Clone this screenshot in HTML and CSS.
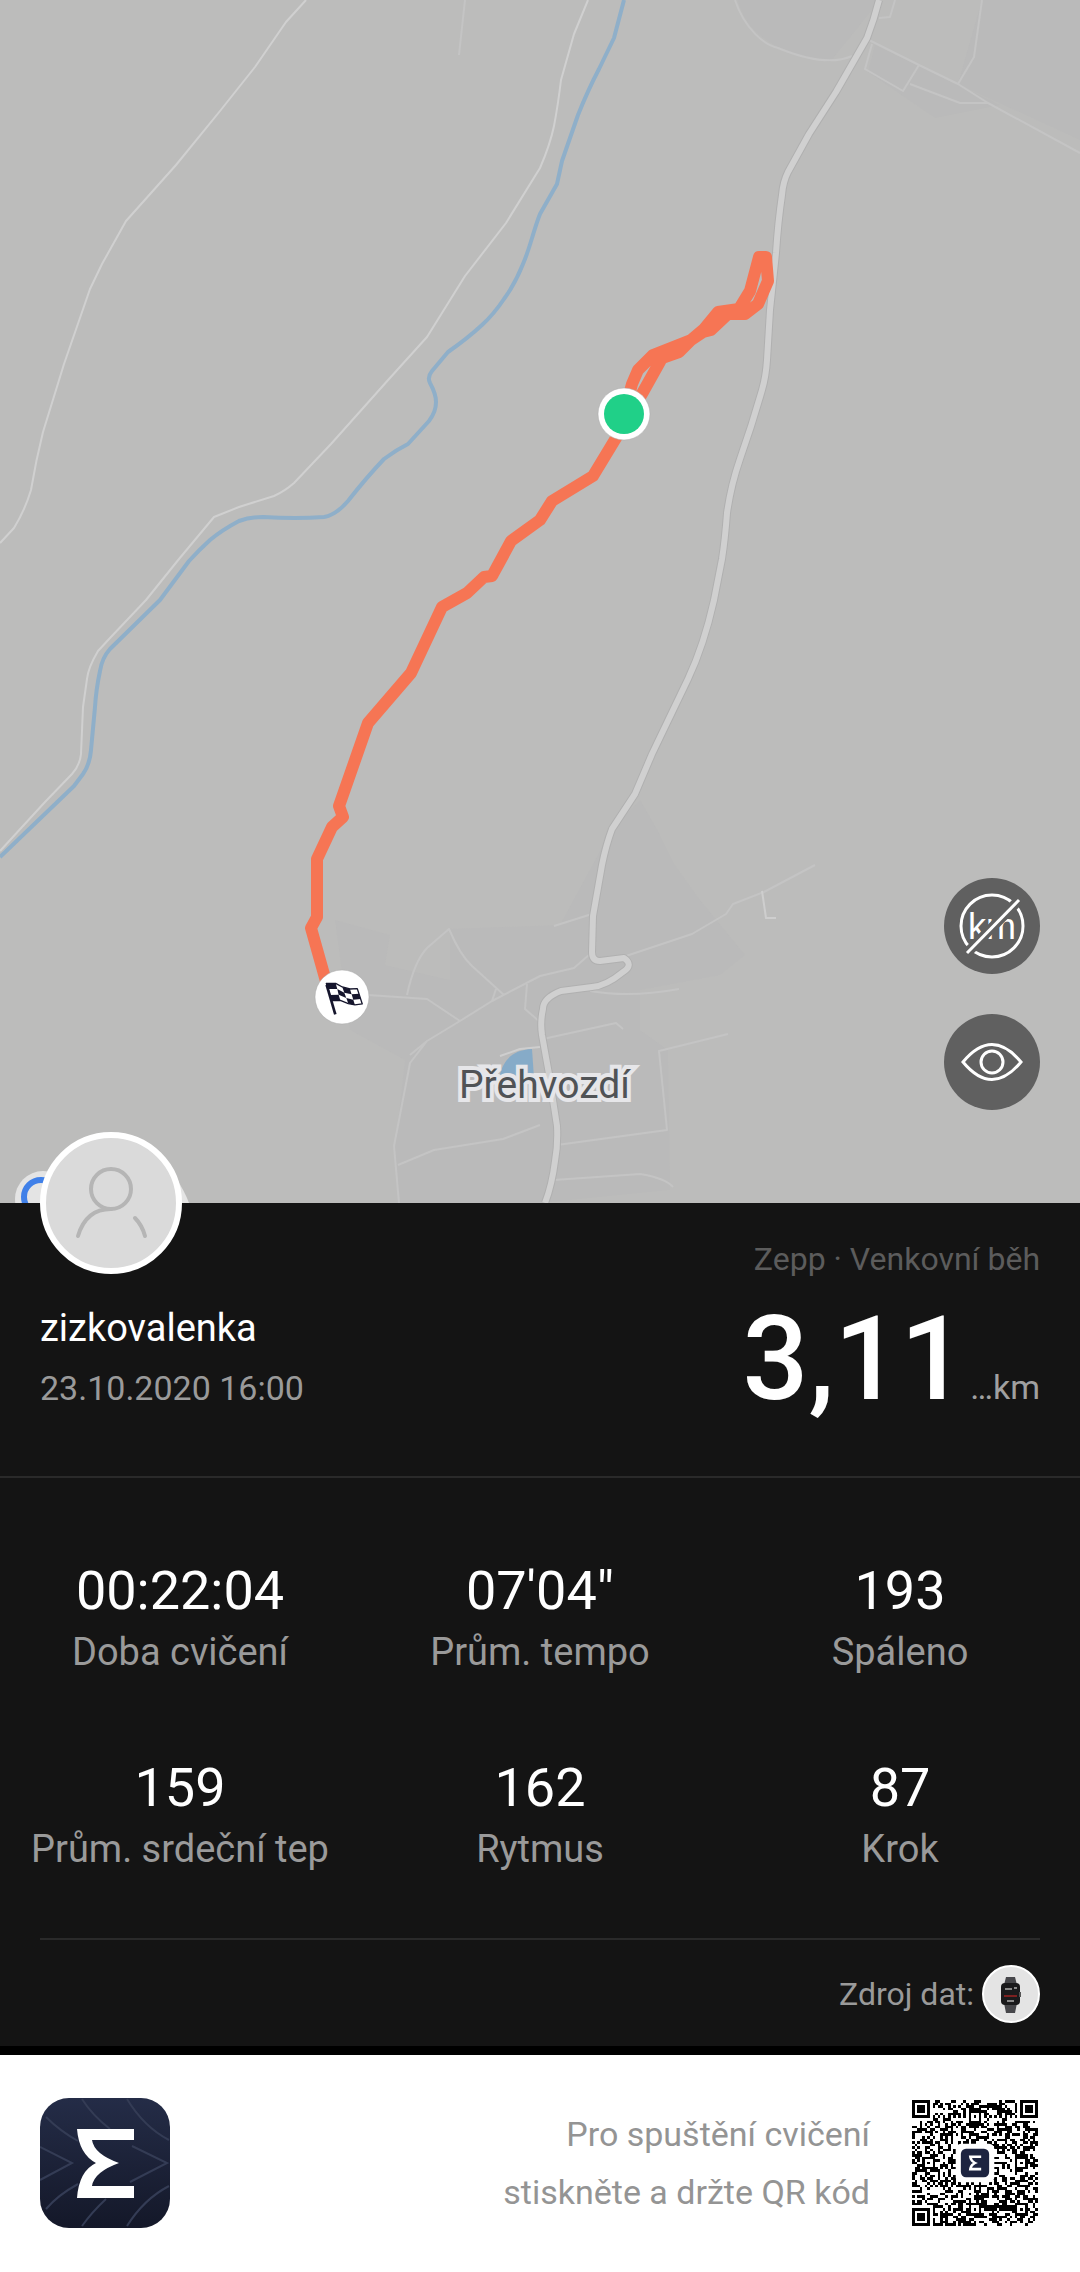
FILE: index.html
```html
<!DOCTYPE html>
<html lang="cs">
<head>
    <meta charset="UTF-8">
    <meta name="viewport" content="width=device-width, initial-scale=1.0">
    <title>Zepp · Venkovní běh</title>
    <link rel="stylesheet" href="styles.css">
</head>
<body>
    <section class="map">
        <svg class="map-canvas" viewBox="0 0 1080 1203" role="img" aria-label="Mapa trasy">
            <defs>
                <path id="road" d="M879 0 Q874 20 867 38 L836 92 L809 134 L788 172 Q783 182 782 195 Q778 222 776 253 Q773 282 770 310 L767 360 Q766 376 762 390 Q752 425 740 459 Q731 485 727 513 Q725 540 722 559 L714 600 Q704 645 688 679 L652 754 L635 794 L612 829 Q606 845 602 865 L593 916 L592 952 Q592 961 600 961 L624 958 Q634 965 623 972 Q606 986 592 987 L561 991 Q543 998 543 1009 Q540 1022 542 1035 L549 1074 L557 1126 Q558 1145 555 1161 Q552 1185 545 1203"/>
            </defs>
            <!-- built-up areas -->
            <g class="area">
                <path d="M335 920 L390 935 L385 965 L450 980 L450 929 L560 925 L612 829 L640 800 L660 835 L675 865 L700 900 L745 955 L720 975 L640 990 L640 1030 L668 1050 L670 1190 L540 1203 L400 1203 L395 1150 L405 1060 L350 1030 Z"/>
                <path d="M738 0 Q750 50 830 62 L880 0 Z M875 45 L1000 105 L935 118 L868 72 Z M982 0 L1080 0 V140 L958 84 Z"/>
            </g>
            <g class="lane">
                <path d="M735 0 C745 30 765 45 778 48 C800 57 830 66 852 56 M465 0 L459 55 M869 40 L919 65 L958 84 L988 103 L1080 153 M982 0 L974 57 L958 84 M872 44 L865 69 L903 91 L919 65 M910 84 L960 103 L988 103 M879 18 L890 17 L895 0"/>
                <path d="M368 995 L427 999 L460 1021 M407 995 Q414 962 427 948 L449 929 Q460 955 472 966 L504 995 M410 1055 L427 1041 L460 1021 L492 1001 L540 976 L574 968 L590 954 M492 1001 L496 989 M527 984 L525 1009 L540 1022 M427 1041 L410 1063 L394 1146 L399 1203 M398 1165 L434 1150 L503 1139 L540 1125"/>
                <path d="M626 956 L692 934 L726 914 L733 904 L764 892 L815 865 M590 991 Q630 998 679 989 M543 1039 L616 1023 L623 1029 M728 1034 L659 1051 L667 1130 L557 1145 M554 1180 L640 1174 Q665 1178 673 1187 M554 926 L592 914"/>
                <path class="lane-bright" d="M762 891 L766 918 L776 918 M500 1056 L520 1049 L540 1047"/>
            </g>
            <path class="pond" d="M499 1078 C503 1060 512 1050 532 1049 L534 1078 Z"/>
            <path class="river" d="M624 0 L614 38 L599 69 Q588 90 578 115 L562 161 L557 184 L540 214 C533 232 530 248 523 264 Q515 284 504 299 Q494 314 482 325 Q468 338 448 352 L432 371 Q427 377 430 383 Q436 394 436 402 Q436 412 429 421 L408 444 Q396 450 384 459 Q366 478 348 501 Q336 515 324 517 Q296 519 263 517 Q250 517 239 521 Q222 530 210 540 Q198 551 189 561 L160 600 L110 649 Q102 658 100 671 Q96 690 95 707 L91 750 Q90 764 83 774 L74 786 L0 857"/>
            <g class="track">
                <path d="M306 0 L286 22 L255 67 L220 111 L176 165 L126 221 L102 264 L90 289 L64 364 L43 432 Q36 460 31 490 Q25 510 14 528 L0 543"/>
                <path d="M588 0 L574 34 L561 80 Q558 105 554 126 Q550 145 540 168 L506 223 L465 276 L427 337 L389 379 L331 444 L294 483 Q285 491 274 496 L239 507 L214 517 L179 559 L146 600 L110 638 L98 651 Q88 668 87 679 L83 707 L81 754 Q80 765 72 774 L45 802 L0 851"/>
            </g>
            <use href="#road" class="road-edge"/>
            <use href="#road" class="road"/>
            <text class="place" x="459" y="1098">Přehvozdí</text>
            <g class="route">
                <path d="M624 414 L632 384 L638 370 L653 355 L691 340 L704 329 L718 312 L739 309 L750 291 L759 257 H766 L768 281 L758 304 L745 314 L728 314 L711 330 L703 332 L691 340 L679 352 L662 358 L643 392 L616 438 L593 476 L552 501 L540 520 L511 541 L492 576 L484 577 L467 593 L442 607 L411 673 L368 723 L339 806 L343 817 L332 827 L317 859 V917 L311 928 L327 985"/>
            </g>
            <circle class="marker" cx="624" cy="414" r="26"/>
            <circle class="marker-start" cx="624" cy="414" r="20"/>
            <circle class="marker" cx="342" cy="997" r="27"/>
            <g class="flag" transform="translate(305 960) scale(.333)">
                <path class="flag-line" d="M64 70 L92 70 L112 81 L135 87 L157 86 L172 132 L150 135 L130 131 L106 121 L80 122 Z"/>
                <path class="flag-pole" d="M65 75 L91 163"/>
                <path d="M64 70 L92 70 L97 87 L69 87 Z M112 81 L135 87 L140 103 L118 98 Z M97 87 L118 98 L124 114 L101 104 Z M140 103 L162 101 L167 117 L145 119 Z M75 105 L101 104 L106 121 L80 122 Z M124 114 L145 119 L150 135 L130 131 Z"/>
            </g>
            <!-- map provider mark, mostly under the avatar -->
            <circle class="provider" cx="43" cy="1199" r="28"/>
            <circle class="provider-ring" cx="41" cy="1197" r="17"/>
            <path class="provider" d="M176 1178 Q185 1192 189 1203 H170 Z"/>
        </svg>
        <div class="map-tools">
            <button type="button" class="tool" aria-label="Skrýt kilometry">
                <svg viewBox="0 0 96 96">
                    <circle class="line" cx="48" cy="48" r="31"/>
                    <text class="km" x="48" y="61">km</text>
                    <path class="line-gap" d="M20 78 L78 19"/>
                    <path class="line" d="M23 75 L75 22"/>
                </svg>
            </button>
            <button type="button" class="tool" aria-label="Zobrazit mapu">
                <svg viewBox="0 0 96 96">
                    <path class="line" d="M19 48 Q48 13 77 48 Q48 83 19 48 Z"/>
                    <circle class="line" cx="48" cy="48" r="11"/>
                </svg>
            </button>
        </div>
    </section>

    <main class="panel">
        <header class="summary">
            <div class="user">
                <svg class="avatar" viewBox="0 0 142 142" role="img" aria-label="Profil">
                    <circle class="avatar-bg" cx="71" cy="71" r="68"/>
                    <circle class="avatar-line" cx="71" cy="57" r="20"/>
                    <path class="avatar-line" d="M38 104 Q46 77 71 77 M95 86 Q102 93 105 104"/>
                </svg>
                <h1 class="name">zizkovalenka</h1>
                <time class="date" datetime="2020-10-23T16:00">23.10.2020 16:00</time>
            </div>
            <div class="result">
                <p class="sport">Zepp · Venkovní běh</p>
                <p class="distance"><strong>3,11</strong><span class="unit">…km</span></p>
            </div>
        </header>

        <dl class="stats">
            <div class="stat"><dt>Doba cvičení</dt><dd>00:22:04</dd></div>
            <div class="stat"><dt>Prům. tempo</dt><dd>07'04"</dd></div>
            <div class="stat"><dt>Spáleno</dt><dd>193</dd></div>
            <div class="stat"><dt>Prům. srdeční tep</dt><dd>159</dd></div>
            <div class="stat"><dt>Rytmus</dt><dd>162</dd></div>
            <div class="stat"><dt>Krok</dt><dd>87</dd></div>
        </dl>

        <div class="source">
            <span>Zdroj dat:</span>
            <svg class="watch" viewBox="0 0 58 58" role="img" aria-label="Hodinky">
                <circle class="watch-bg" cx="29" cy="29" r="28"/>
                <path class="watch-strap" d="M24 12 H33 L35 20 H22 Z M22 38 H35 L33 48 H24 Z"/>
                <rect class="watch-case" x="19" y="18" width="19" height="22" rx="4"/>
                <path class="watch-key" d="M38 27 V32"/>
                <path class="watch-text" d="M23 24 H30 M32 23 H35 M25 36 H32"/>
                <path class="watch-pulse" d="M22 31 H35"/>
            </svg>
        </div>
    </main>

    <footer class="footer">
        <svg class="logo" viewBox="0 0 130 130" role="img" aria-label="Zepp">
            <defs>
                <linearGradient id="navy" x1="0" y1="0" x2="0" y2="1">
                    <stop offset="0" stop-color="#242c47"/>
                    <stop offset="1" stop-color="#141829"/>
                </linearGradient>
            </defs>
            <rect width="130" height="130" rx="29" fill="url(#navy)"/>
            <path class="logo-rays" d="M0 49 L32 65 L0 82 M6 19 Q20 33 38 43 M42 1 Q52 17 70 31 M87 1 Q104 29 129 42 M92 48 L127 65 L90 84 M6 111 Q18 97 38 86 M42 128 Q52 114 66 101 M87 128 Q104 101 129 88"/>
            <path id="sigma" class="logo-mark" d="M37 31 H94 V42 H52 Q54 56 79 65 Q54 74 52 88 H94 V100 H37 Q39 73 56 65 Q39 56 37 31 Z"/>
        </svg>
        <p class="hint">Pro spuštění cvičení<br>stiskněte a držte QR kód</p>
        <svg class="qr" viewBox="0 0 49 49" role="img" aria-label="QR kód">
            <path id="qr-modules" shape-rendering="crispEdges"/>
            <rect class="qr-blank" x="17" y="17" width="15" height="15" rx="2"/>
            <rect x="19" y="19" width="11" height="11" rx="2" fill="#1d2440"/>
            <use href="#sigma" transform="translate(19 19) scale(.084)"/>
        </svg>
    </footer>
    <script src="qr.js"></script>
</body>
</html>
```

FILE: styles.css
```css
* {
    box-sizing: border-box;
}
body {
    margin: 0;
    background: white;
    font-family: Roboto, "Liberation Sans", sans-serif;
}
h1, p, dl, dd {
    margin: 0;
    font-weight: 400;
}
svg {
    display: block;
}

/* map */
.map {
    position: relative;
    background: #bcbcbb;
}
.map-canvas {
    width: 100%;
    height: auto;
}
.map-canvas path {
    stroke-linejoin: round;
}
.area {
    fill: #bababa;
}
.lane {
    fill: none;
    stroke: #c4c4c4;
    stroke-width: 2;
}
.lane-bright {
    stroke: #cecece;
}
.pond {
    fill: #86abc8;
}
.river {
    fill: none;
    stroke: #8fafc9;
    stroke-width: 4;
}
.track {
    fill: none;
    stroke: #d0d0d0;
    stroke-width: 2;
}
.road-edge {
    fill: none;
    stroke: #b0b0b0;
    stroke-width: 8;
}
.road {
    fill: none;
    stroke: #d0d0d0;
    stroke-width: 6;
}
.place {
    font-size: 39px;
    fill: #505356;
    stroke: #e6e6e9;
    stroke-width: 8;
    paint-order: stroke;
}
.route {
    fill: none;
    stroke: #f67554;
    stroke-width: 12;
}
.marker {
    fill: white;
    stroke: #a9a9a9;
    stroke-opacity: .5;
}
.marker-start {
    fill: #20d088;
}
.flag {
    fill: #15152c;
}
.flag-line {
    fill: white;
    stroke: #15152c;
    stroke-width: 4;
}
.flag-pole {
    stroke: #15152c;
    stroke-width: 8;
}
.provider {
    fill: #e4e4e4;
}
.provider-ring {
    fill: #e4e4e4;
    stroke: #4080e8;
    stroke-width: 6;
}
.map-tools {
    position: absolute;
    right: 40px;
    bottom: 93px;
    display: flex;
    flex-direction: column;
    gap: 40px;
}
.tool {
    width: 96px;
    height: 96px;
    padding: 0;
    border: 0;
    border-radius: 50%;
    background: #606060;
}
.line {
    fill: none;
    stroke: white;
    stroke-width: 3;
}
.line-gap {
    stroke: #606060;
    stroke-width: 10;
}
.km {
    font-size: 36px;
    fill: white;
    text-anchor: middle;
}

/* workout panel */
.panel {
    background: #141414;
    border-bottom: 9px solid black;
    color: white;
}
.summary {
    display: flex;
    justify-content: space-between;
    padding: 0 40px 61px;
    border-bottom: 2px solid #2a2a2a;
}
.avatar {
    position: relative;
    width: 142px;
    height: 142px;
    margin-top: -71px;
    margin-bottom: 30px;
}
.avatar-bg {
    fill: #dadada;
    stroke: white;
    stroke-width: 6;
}
.avatar-line {
    fill: none;
    stroke: #b5b5b5;
    stroke-width: 4;
    stroke-linecap: round;
}
.name {
    font-size: 38px;
    line-height: 48px;
}
.date {
    display: block;
    margin-top: 12px;
    font-size: 34px;
    line-height: 48px;
    color: #9a9a9a;
}
.result {
    padding-top: 32px;
    text-align: right;
}
.sport {
    font-size: 32px;
    line-height: 48px;
    color: #5c5c5c;
}
.distance {
    display: flex;
    align-items: baseline;
    justify-content: flex-end;
    gap: 4px;
    margin-top: 20px;
}
.distance strong {
    font-size: 116px;
    font-weight: 500;
    line-height: 112px;
}
.unit {
    font-size: 34px;
    line-height: 48px;
    color: #a0a0a0;
}
.stats {
    display: grid;
    grid-template-columns: repeat(3, 1fr);
    row-gap: 75px;
    padding: 77px 0 64px;
    text-align: center;
}
.stat {
    display: flex;
    flex-direction: column-reverse;
}
.stat dt {
    font-size: 38px;
    line-height: 50px;
    color: #9a9a9a;
}
.stat dd {
    font-size: 54px;
    line-height: 72px;
}
.source {
    display: flex;
    align-items: center;
    justify-content: flex-end;
    gap: 8px;
    margin: 0 40px;
    padding: 25px 0 23px;
    border-top: 2px solid #2a2a2a;
    font-size: 32px;
    color: #9a9a9a;
}
.watch {
    width: 58px;
    height: 58px;
}
.watch-bg {
    fill: #e4e4e4;
    stroke: white;
    stroke-width: 2;
}
.watch-strap {
    fill: #47474b;
}
.watch-case {
    fill: #1a1a1c;
}
.watch-key {
    stroke: #555;
    stroke-width: 2;
}
.watch-text {
    stroke: #8a8a8a;
    stroke-width: 2;
}
.watch-pulse {
    stroke: #7c2020;
    stroke-width: 2;
}

/* footer */
.footer {
    display: flex;
    align-items: center;
    padding: 43px 42px 43px 40px;
}
.logo {
    width: 130px;
    height: 130px;
}
.logo-rays {
    fill: none;
    stroke: #343c55;
    stroke-width: 2;
}
.logo-mark {
    fill: white;
}
.hint {
    margin: -8px 42px -8px auto;
    font-size: 34px;
    line-height: 58px;
    text-align: right;
    color: #949494;
}
.qr {
    width: 126px;
    height: 126px;
}
.qr-blank {
    fill: white;
}
```

FILE: qr.js
```javascript
/* Fills the QR code path: finder and alignment squares, timing lines, data modules */
const SIZE = 49;
const squares = [[3, 3, 3], [45, 3, 3], [3, 45, 3], [24, 6, 2], [6, 24, 2], [42, 24, 2], [24, 42, 2], [42, 42, 2]];
let seed = 311;

function dataModule() {
    seed = (seed * 1103515245 + 12345) % 2147483648;
    return seed / 2147483648 < 0.5;
}

function isDark(x, y) {
    const data = dataModule();
    for (const [cx, cy, r] of squares) {
        const ring = Math.max(Math.abs(x - cx), Math.abs(y - cy));
        if (ring <= r) return r === 3 ? ring !== 2 : ring !== 1;
        if (r === 3 && ring === 4) return false;
    }
    if (x === 6 || y === 6) return (x + y) % 2 === 0;
    return data;
}

let d = "";
for (let y = 0; y < SIZE; y++) {
    for (let x = 0; x < SIZE; x++) {
        if (isDark(x, y)) d += `M${x} ${y}h1v1h-1z`;
    }
}
document.getElementById("qr-modules").setAttribute("d", d);
```
